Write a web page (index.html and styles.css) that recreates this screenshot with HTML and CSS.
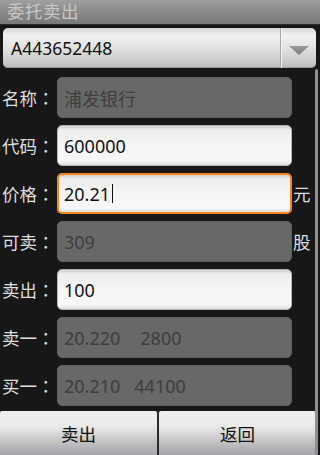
FILE: index.html
```html
<!DOCTYPE html>
<html>
<head>
<meta charset="utf-8">
<link rel="stylesheet" href="styles.css">
</head>
<body>
<div class="screen">
  <div class="titlebar">委托卖出</div>
  <div class="spinner">
    <span class="spinner-text">A443652448</span>
    <span class="spinner-btn"><svg width="20" height="9" viewBox="0 0 20 9"><defs><linearGradient id="ag" x1="0" y1="0" x2="0" y2="1"><stop offset="0" stop-color="#9a9a9a"/><stop offset="1" stop-color="#7c7c7c"/></linearGradient></defs><path d="M0 0 L20 0 L10 9 Z" fill="url(#ag)"/></svg></span>
  </div>
  <div class="form">
    <div class="row"><span class="label"><span class="lt">名称</span><span class="colon">：</span></span><div class="field disabled">浦发银行</div><span class="suffix"></span></div>
    <div class="row"><span class="label"><span class="lt">代码</span><span class="colon">：</span></span><div class="field">600000</div><span class="suffix"></span></div>
    <div class="row"><span class="label"><span class="lt">价格</span><span class="colon">：</span></span><div class="field focused">20.21<span class="caret"></span></div><span class="suffix">元</span></div>
    <div class="row"><span class="label"><span class="lt">可卖</span><span class="colon">：</span></span><div class="field disabled">309</div><span class="suffix">股</span></div>
    <div class="row"><span class="label"><span class="lt">卖出</span><span class="colon">：</span></span><div class="field">100</div><span class="suffix"></span></div>
    <div class="row"><span class="label"><span class="lt">卖一</span><span class="colon">：</span></span><div class="field disabled">20.220<span class="gap"></span>2800</div><span class="suffix"></span></div>
    <div class="row"><span class="label"><span class="lt">买一</span><span class="colon">：</span></span><div class="field disabled">20.210<span class="gap2"></span>44100</div><span class="suffix"></span></div>
  </div>
  <div class="buttons">
    <div class="btn">卖出</div>
    <div class="btn">返回</div>
  </div>
  <div class="scrollbar"></div>
</div>
</body>
</html>
```
FILE: styles.css
```css
html, body {
  margin: 0;
  padding: 0;
  background: #171717;
}
.screen {
  position: relative;
  width: 320px;
  height: 455px;
  overflow: hidden;
  background: #171717;
  font-family: "Noto Sans", "Noto Sans CJK SC", sans-serif;
}
.titlebar {
  height: 24px;
  line-height: 22px;
  padding-left: 7px;
  font-size: 17.5px;
  color: #c6c6c6;
  background: linear-gradient(#a0a0a0, #8a8a8a 50%, #787878);
  border-bottom: 1px solid #2a2a2a;
  letter-spacing: 0.5px;
}
.spinner {
  margin: 3px 4px 0 3px;
  height: 40px;
  display: flex;
  align-items: center;
  border-radius: 5px;
  background: linear-gradient(#d6d6d6, #f1f1f1 18%, #e2e2e2 50%, #c9c9c9 85%, #b9b9b9);
  box-shadow: inset 0 -1px 0 #9c9c9c;
}
.spinner-text {
  flex: 1;
  padding-left: 8px;
  font-size: 17.5px;
  color: #111;
}
.spinner-btn {
  width: 36px;
  height: 40px;
  border-left: 1px solid #a6a6a6;
  box-shadow: inset 1px 0 0 #f4f4f4;
  display: flex;
  align-items: center;
  justify-content: center;
  padding-top: 5px;
  box-sizing: border-box;
}
.form {
  padding-top: 9px;
  display: flex;
  flex-direction: column;
  gap: 7px;
}
.row {
  display: flex;
  align-items: center;
  height: 41px;
}
.label {
  width: 55px;
  padding-left: 2px;
  box-sizing: border-box;
  display: flex;
  align-items: center;
  font-size: 17.5px;
  color: #dedede;
  white-space: nowrap;
}
.lt {
  width: 35px;
  flex: none;
}
.colon {
  width: 17px;
  flex: none;
  text-align: center;
  font-family: "Noto Sans CJK TC", sans-serif;
}
.field {
  margin-left: 2px;
  width: 235px;
  height: 41px;
  box-sizing: border-box;
  border-radius: 5px;
  padding-left: 6px;
  display: flex;
  align-items: center;
  font-size: 18px;
  color: #111;
  background: linear-gradient(#cfcfcf, #ececec 10%, #f4f4f4 40%, #f8f8f8 90%, #d9d9d9);
  border: 1px solid #b8b8b8;
}
.field.focused {
  border: 2px solid #f7861c;
  padding-left: 5px;
}
.field.disabled {
  background: #686868;
  border: 1px solid #606060;
  color: #3e3e3e;
}
.caret {
  display: inline-block;
  width: 1px;
  height: 19px;
  background: #111;
  margin-left: 2px;
}
.gap { display: inline-block; width: 20px; }
.gap2 { display: inline-block; width: 14px; }
.suffix {
  margin-left: 1px;
  width: 22px;
  font-size: 17.5px;
  color: #dedede;
}
.buttons {
  position: absolute;
  left: 0;
  right: 4px;
  bottom: 0;
  height: 44px;
  display: flex;
  gap: 2px;
  background: #2a2a2a;
}
.btn {
  flex: 1;
  display: flex;
  align-items: center;
  justify-content: center;
  font-size: 17.5px;
  color: #111;
  background: linear-gradient(#efefef, #eaeaea 35%, #c8c8c8 65%, #aeaeb4 90%, #a4a4ac);
  border-radius: 2px 2px 0 0;
}
.scrollbar {
  position: absolute;
  right: 2px;
  top: 69px;
  bottom: 0;
  width: 3px;
  border-radius: 2px;
  background: #8e8e8e;
}
```
